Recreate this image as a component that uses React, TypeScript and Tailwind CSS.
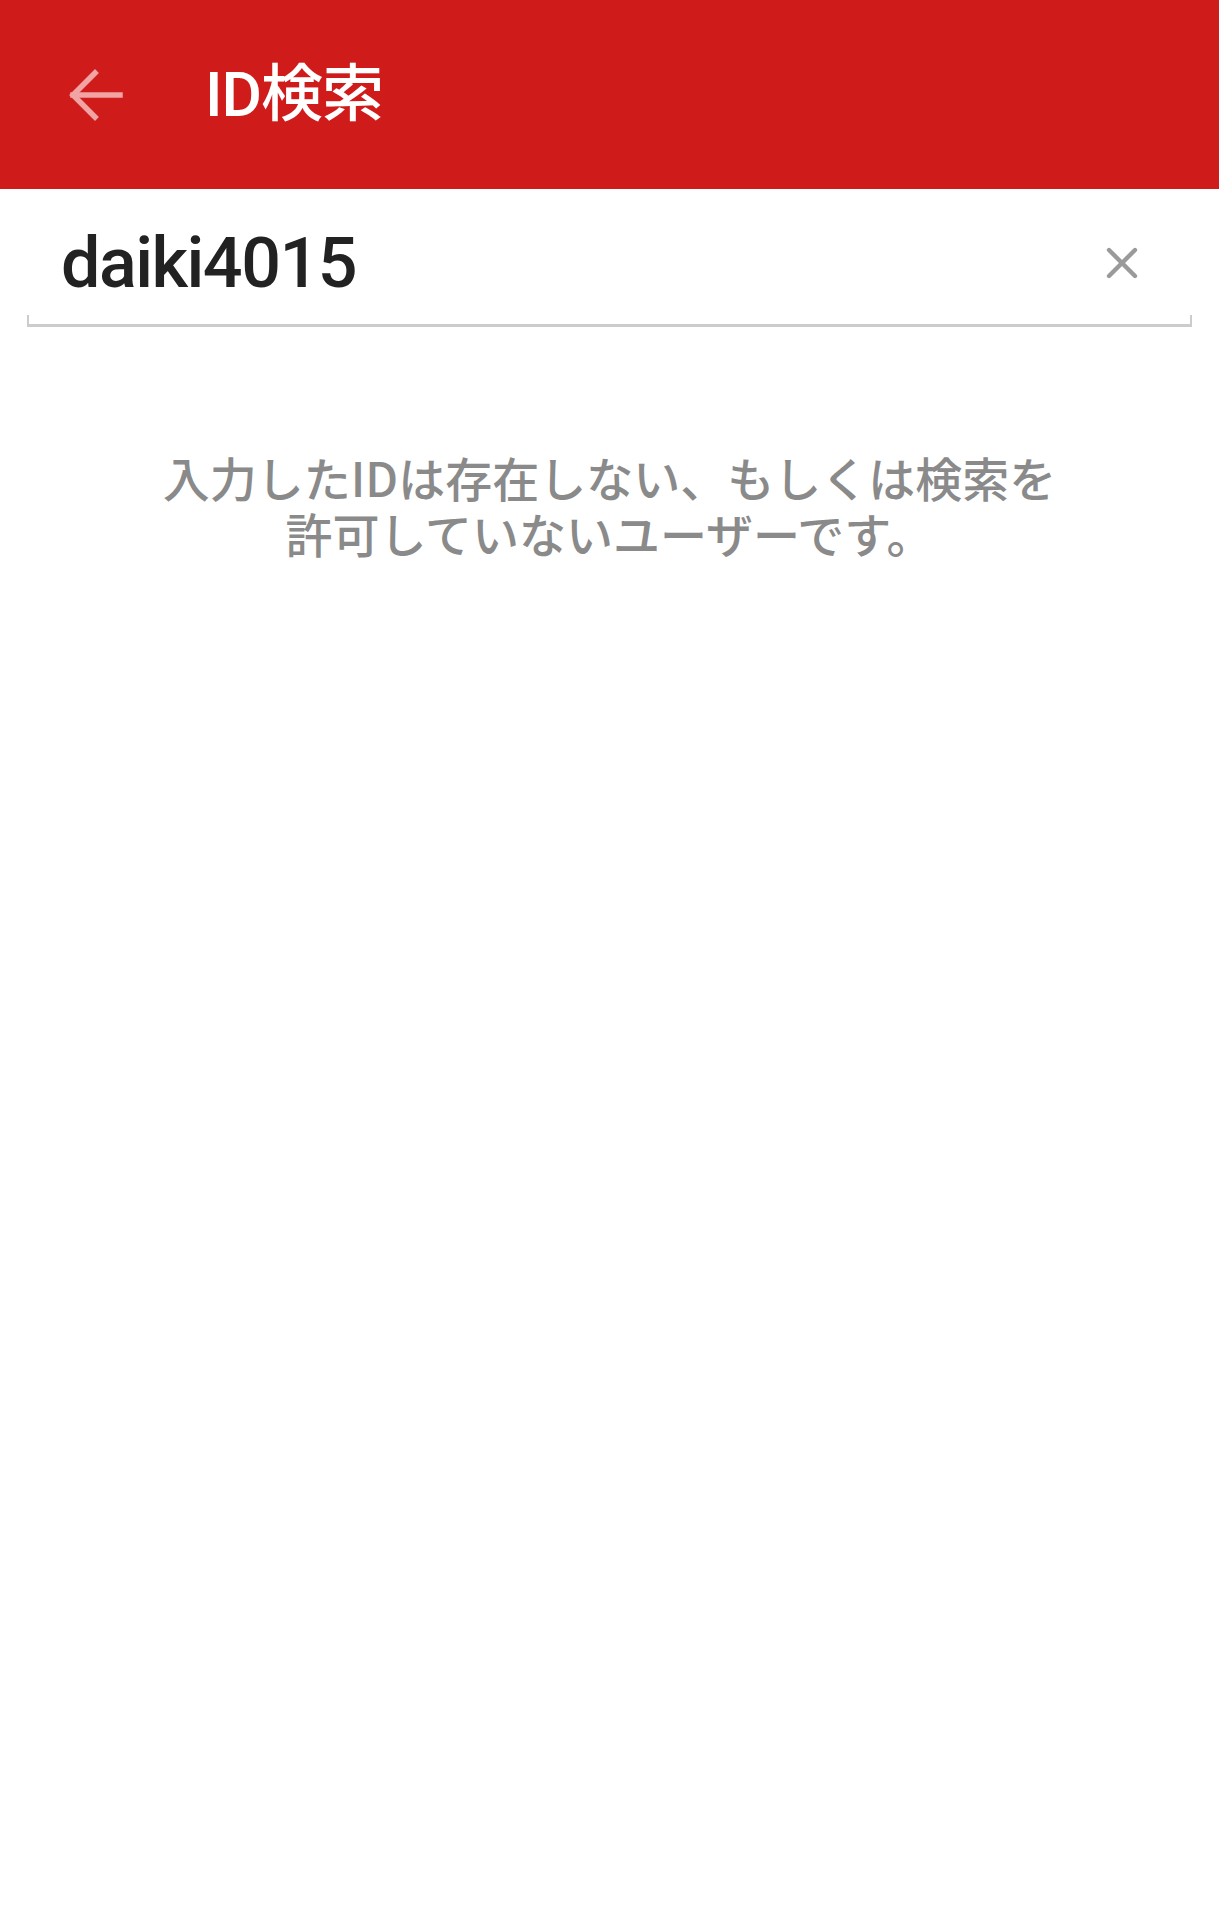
import { X } from 'lucide-react'

export default function App() {
  return (
    <div className="min-h-[1920px] w-full bg-white" style={{ fontFamily: '"Roboto", "Noto Sans CJK JP", sans-serif' }}>
      {/* header */}
      <header className="flex h-[189px] items-center bg-[#d01b1b] pl-[67px]">
        <svg width="56" height="54" viewBox="0 0 56 54" fill="none" stroke="#f2a3a3" strokeWidth="5.5" strokeLinecap="square">
          <path d="M6 27 H53" />
          <path d="M28 5 L6 27 L28 49" />
        </svg>
        <h1 className="ml-[82px] text-[62px] font-medium leading-none tracking-[-1px] text-white">ID検索</h1>
      </header>

      {/* search field */}
      <div className="px-[27px]">
        <div className="flex h-[126px] items-center justify-between pl-[34px] pr-[44px] pt-[22px]">
          <span className="text-[70px] font-medium leading-none tracking-[-1.5px] text-[#222222]">daiki4015</span>
          <X size={52} strokeWidth={2} className="text-[#9a9a9a]" />
        </div>
        <div className="h-[12px] border-x-[2px] border-b-[3px] border-[#cccccc]" />
      </div>

      {/* message */}
      <p
        className="mt-[122px] text-center text-[47px] font-medium leading-[56px] text-[#8a8a8a]"
        style={{ fontFamily: '"Noto Sans CJK JP", sans-serif' }}
      >
        入力したIDは存在しない、もしくは検索を
        <br />
        許可していないユーザーです。
      </p>
    </div>
  )
}
